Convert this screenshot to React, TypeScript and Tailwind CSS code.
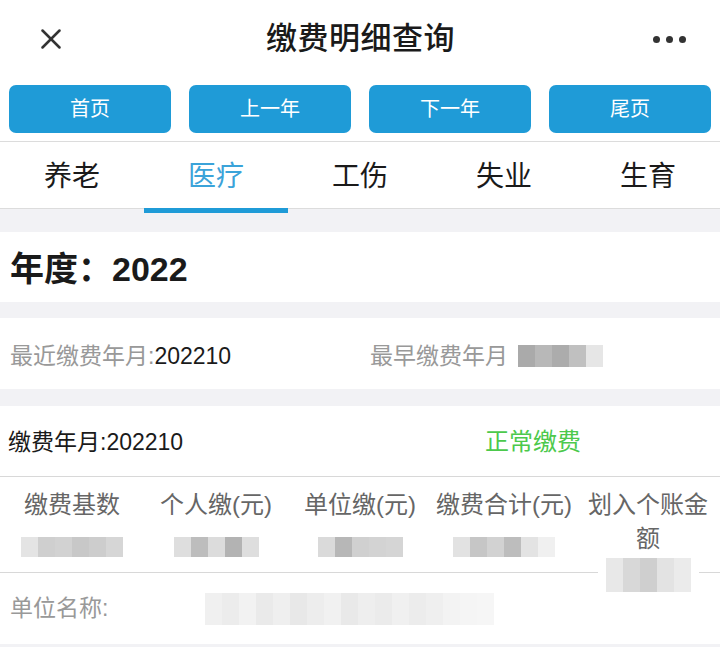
import { X } from 'lucide-react';

const font = { fontFamily: '"Liberation Sans", "Noto Sans CJK SC", sans-serif' };

const navButtons = ['首页', '上一年', '下一年', '尾页'];
const tabs = ['养老', '医疗', '工伤', '失业', '生育'];
const columns = ['缴费基数', '个人缴(元)', '单位缴(元)', '缴费合计(元)', '划入个账金额'];

// pixelated placeholder for masked values
function Blur({ cells, h = 'h-[20px]' }: { cells: string[]; h?: string }) {
  return (
    <div className={`flex ${h}`}>
      {cells.map((c, i) => (
        <div key={i} className={`w-[17px] h-full ${c}`} />
      ))}
    </div>
  );
}

export default function App() {
  return (
    <div style={font} className="w-[720px] h-[647px] bg-[#f2f2f5] overflow-hidden text-[#1a1a1a]">
      <header className="bg-white">
        <div className="h-[78px] flex items-center justify-between px-[34px]">
          <X size={34} strokeWidth={1.8} className="text-[#333]" />
          <h1 className="text-[31px] font-medium tracking-[0.5px]">缴费明细查询</h1>
          <div className="flex gap-[6px]">
            <span className="w-[7px] h-[7px] rounded-full bg-[#333]" />
            <span className="w-[7px] h-[7px] rounded-full bg-[#333]" />
            <span className="w-[7px] h-[7px] rounded-full bg-[#333]" />
          </div>
        </div>
        <div className="grid grid-cols-4 gap-[18px] px-[9px] pt-[7px] pb-[8px]">
          {navButtons.map((b) => (
            <button
              key={b}
              className="h-[48px] rounded-[7px] bg-[#1f9bd7] text-white text-[20px]"
            >
              {b}
            </button>
          ))}
        </div>
      </header>

      <nav className="grid grid-cols-5 bg-white border-t border-b border-[#dcdcdc] h-[68px]">
        {tabs.map((t, i) => (
          <div key={t} className="relative flex items-center justify-center pt-[4px]">
            <span className={`text-[28px] ${i === 1 ? 'text-[#3ba3d9]' : 'text-[#1a1a1a]'}`}>{t}</span>
            {i === 1 && <span className="absolute left-0 right-0 -bottom-[5px] h-[5px] bg-[#1f9bd7]" />}
          </div>
        ))}
      </nav>

      <section className="mt-[23px] bg-white h-[70px] flex items-center px-[10px] pt-[5px]">
        <span className="text-[34px] font-bold">年度：2022</span>
      </section>

      <section className="mt-[16px] bg-white h-[71px] grid grid-cols-2 items-center px-[10px] text-[23px] pt-[5px]">
        <div>
          <span className="text-[#999]">最近缴费年月:</span>
          <span>202210</span>
        </div>
        <div className="flex items-center pl-[10px]">
          <span className="text-[#999]">最早缴费年月</span>
          <div className="ml-[10px]">
            <Blur cells={['bg-[#aaa]', 'bg-[#b8b8b8]', 'bg-[#acacac]', 'bg-[#c0c0c0]', 'bg-[#e6e6e6]']} h="h-[22px]" />
          </div>
        </div>
      </section>

      <section className="mt-[17px] bg-white">
        <div className="h-[71px] grid grid-cols-2 items-center px-[8px] text-[23px] border-b border-[#d8d8d8] pt-[2px]">
          <span>缴费年月:202210</span>
          <span className="text-[#4cc94c] text-[24px] pl-[125px]">正常缴费</span>
        </div>
        <div className="grid grid-cols-5 border-b border-[#d8d8d8] h-[96px]">
          {columns.map((c, i) => (
            <div key={c} className="flex flex-col items-center pt-[11px]">
              <span className="text-[24px] text-[#666] text-center leading-[34px] px-[4px]">{c}</span>
              {i === 0 && <div className="mt-[15px]"><Blur cells={['bg-[#e4e4e4]', 'bg-[#cfcfcf]', 'bg-[#d2d2d2]', 'bg-[#c8c8c8]', 'bg-[#cdcdcd]', 'bg-[#d6d6d6]']} /></div>}
              {i === 1 && <div className="mt-[15px]"><Blur cells={['bg-[#dedede]', 'bg-[#bdbdbd]', 'bg-[#dcdcdc]', 'bg-[#b3b3b3]', 'bg-[#dedede]']} /></div>}
              {i === 2 && <div className="mt-[15px]"><Blur cells={['bg-[#dadada]', 'bg-[#b7b7b7]', 'bg-[#d0d0d0]', 'bg-[#d3d3d3]', 'bg-[#d5d5d5]']} /></div>}
              {i === 3 && <div className="mt-[15px]"><Blur cells={['bg-[#e2e2e2]', 'bg-[#c6c6c6]', 'bg-[#d2d2d2]', 'bg-[#bdbdbd]', 'bg-[#e3e3e3]', 'bg-[#f0f0f0]']} /></div>}
              {i === 4 && (
                <div className="relative z-10 bg-white px-[8px] pt-[2px] pb-[2px]">
                  <Blur cells={['bg-[#e8e8e8]', 'bg-[#d8d8d8]', 'bg-[#cfcfcf]', 'bg-[#e3e3e3]', 'bg-[#ebebeb]']} h="h-[34px]" />
                </div>
              )}
            </div>
          ))}
        </div>
        <div className="h-[71px] flex items-center px-[10px] text-[23px]">
          <span className="text-[#999] w-[195px]">单位名称:</span>
          <Blur
            cells={['bg-[#f0f0f0]', 'bg-[#ececec]', 'bg-[#f2f2f2]', 'bg-[#eaeaea]', 'bg-[#efefef]', 'bg-[#e8e8e8]', 'bg-[#ededed]', 'bg-[#f1f1f1]', 'bg-[#e9e9e9]', 'bg-[#eeeeee]', 'bg-[#ebebeb]', 'bg-[#f0f0f0]', 'bg-[#ececec]', 'bg-[#efefef]', 'bg-[#f3f3f3]', 'bg-[#f5f5f5]', 'bg-[#f6f6f6]']}
            h="h-[32px]"
          />
        </div>
      </section>
    </div>
  );
}
